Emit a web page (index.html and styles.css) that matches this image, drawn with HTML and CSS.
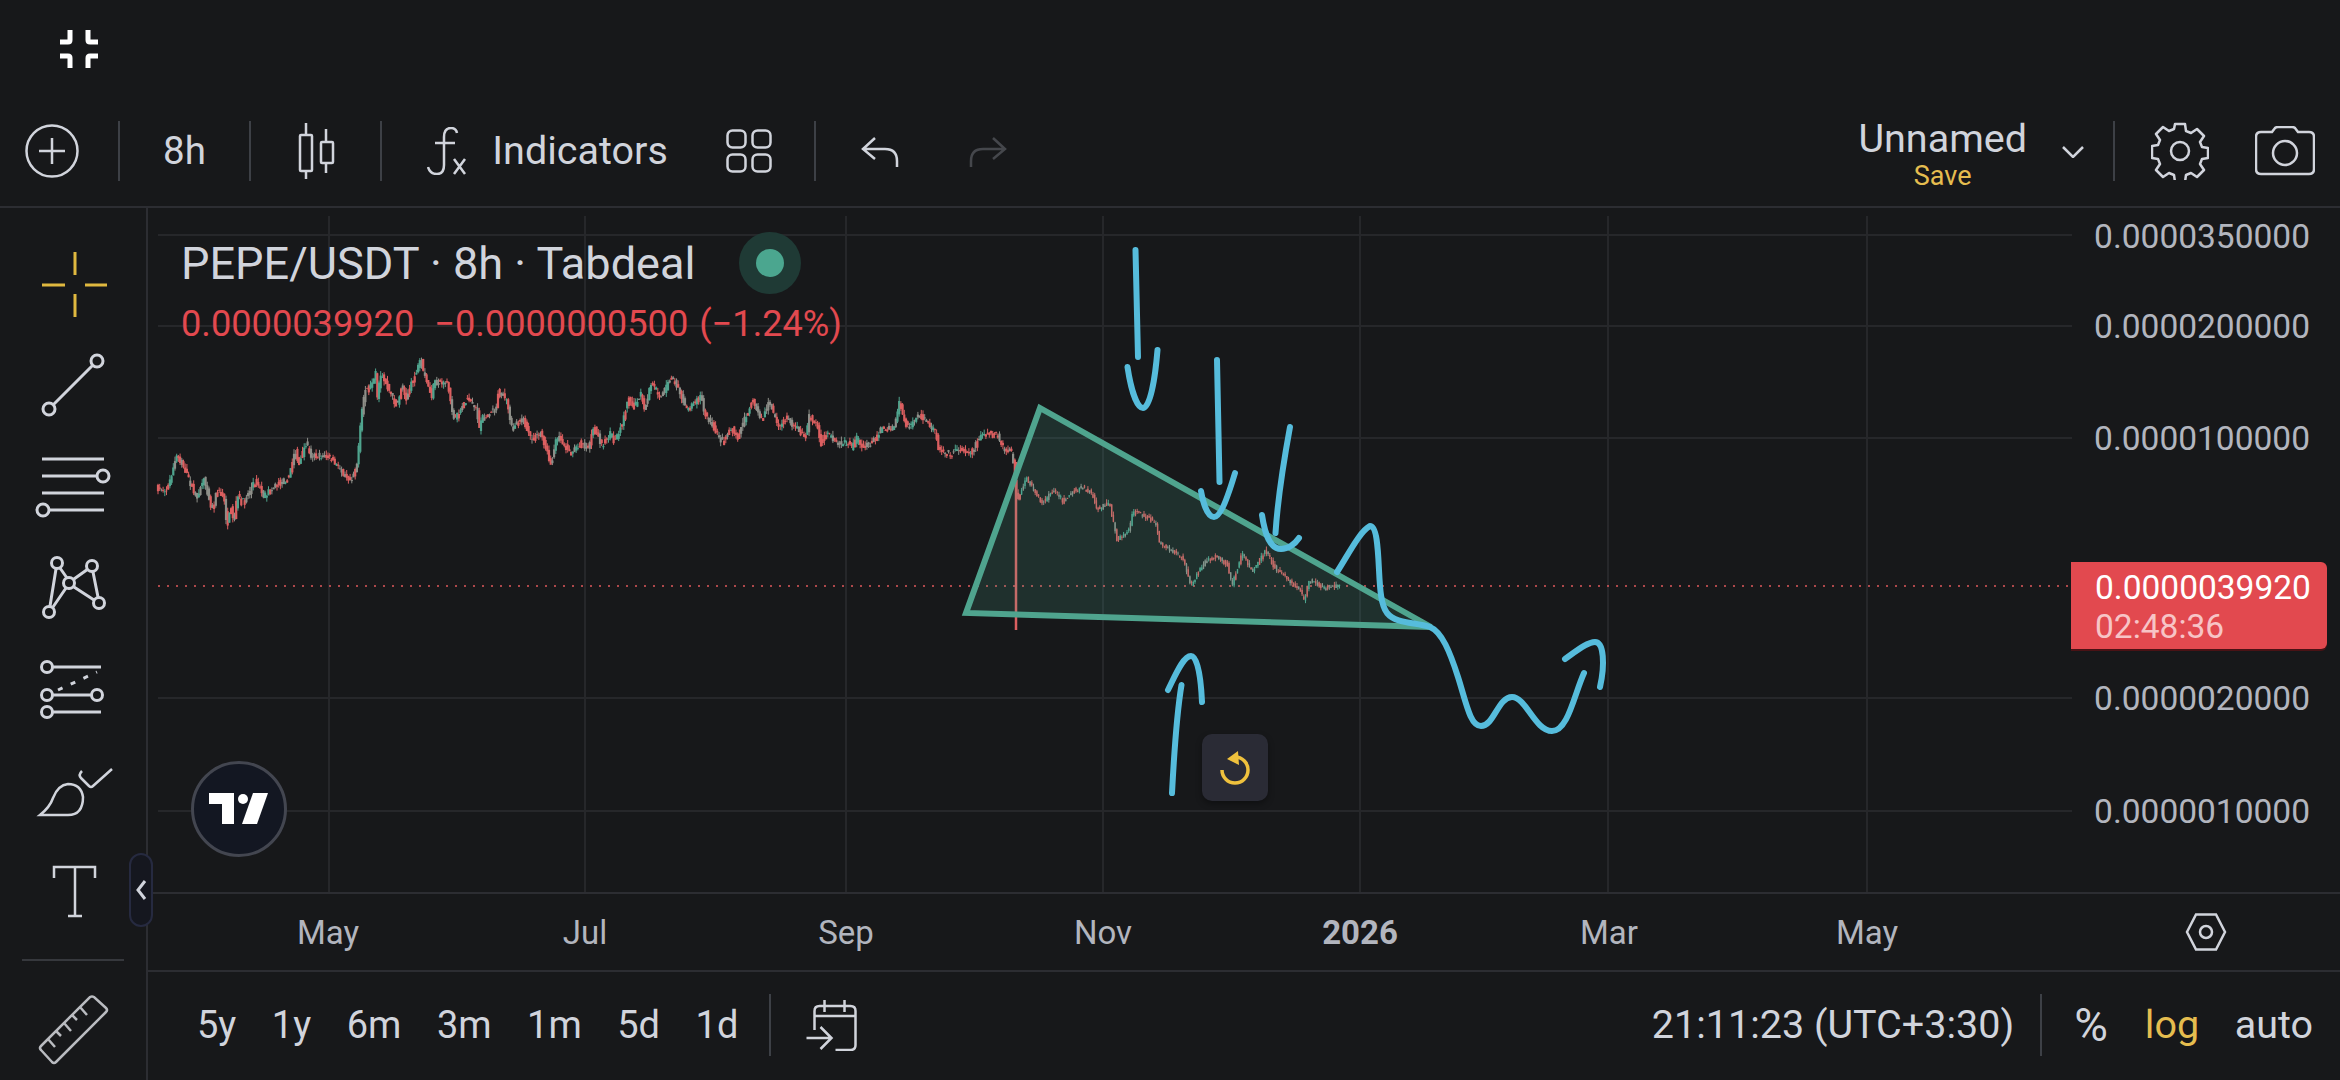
FILE: index.html
```html
<!DOCTYPE html>
<html lang="en">
<head>
<meta charset="utf-8">
<title>PEPE/USDT chart</title>
<link rel="stylesheet" href="styles.css">
</head>
<body>
<div class="app">
  <header class="topbar">
    <svg class="ic-exit" viewBox="0 0 40 40" width="40" height="40"><path d="M11 1v10q0 2-2 2H1M29 1v10q0 2 2 2h8M1 27h8q2 0 2 2v10M39 27h-8q-2 0-2 2v10" fill="none" stroke="#fff" stroke-width="5"/></svg>
  </header>

  <nav class="toolbar">
    <svg class="ic ic-plus" viewBox="0 0 54 54" width="54" height="54"><circle cx="27" cy="27" r="25.500"/><path d="M27 14v26M14 27h26"/></svg>
    <span class="sep sep-a"></span>
    <span class="tb-text tf">8h</span>
    <span class="sep sep-b"></span>
    <svg class="ic ic-candle" viewBox="0 0 38 56" width="38" height="56"><path d="M9 0v12M9 48v8M29 6v13M29 40v10"/><rect x="3" y="12" width="12" height="36" rx="1"/><rect x="24" y="19" width="12" height="21" rx="1"/></svg>
    <span class="sep sep-c"></span>
    <svg class="ic ic-fx" viewBox="0 0 40 48" width="40" height="48"><path d="M30 6q-1-5-6-5-7 0-7 9v28q0 9-7 9-7 0-9-7M8 16h20"/><path d="M27 32l11 15M38 32L27 47"/></svg>
    <span class="tb-text indicators">Indicators</span>
    <svg class="ic ic-grid" viewBox="0 0 46 44" width="46" height="44"><rect x="1.500" y="1.500" width="18" height="17" rx="5"/><rect x="26.500" y="1.500" width="18" height="17" rx="5"/><rect x="1.500" y="25.500" width="18" height="17" rx="5"/><rect x="26.500" y="25.500" width="18" height="17" rx="5"/></svg>
    <span class="sep sep-d"></span>
    <svg class="ic ic-undo" viewBox="0 0 38 30" width="38" height="30"><path d="M14 1L2 12l12 10M2 12h22q12 0 12 12v6"/></svg>
    <svg class="ic ic-redo" viewBox="0 0 38 30" width="38" height="30"><path d="M24 1l12 11-12 10M36 12H14Q2 12 2 24v6"/></svg>
    <div class="tb-right">
      <div class="layout-name">
        <span class="ln-title">Unnamed</span>
        <span class="ln-save">Save</span>
      </div>
      <svg class="ic ic-chev" viewBox="0 0 22 12" width="22" height="12"><path d="M1 1l10 10L21 1"/></svg>
      <span class="sep sep-e"></span>
      <svg class="ic ic-gear" viewBox="0 0 58 58" width="58" height="58"><path d="M24 2h10l1 7 5 2 6-4 7 7-4 6 2 5 6 1v10l-6 1-2 5 4 6-7 7-6-4-5 2-1 7H24l-1-7-5-2-6 4-7-7 4-6-2-5-6-1V24l6-1 2-5-4-6 7-7 6 4 5-2z" stroke-linejoin="round"/><circle cx="29" cy="29" r="9"/></svg>
      <svg class="ic ic-camera" viewBox="0 0 60 50" width="60" height="50"><path d="M6 6h11l3-4q1-1 3-1h14q2 0 3 1l3 4h11q5 0 5 5v32q0 5-5 5H6q-5 0-5-5V11q0-5 5-5z"/><ellipse cx="30" cy="27" rx="12" ry="12"/></svg>
    </div>
  </nav>

  <div class="main">
    <aside class="sidebar">
      <svg class="tool" viewBox="0 234 146 102"><path class="yl" d="M75 252v23M75 294v23M42 285h23M85 285h22"/></svg>
      <svg class="tool" viewBox="0 336 146 102"><path d="M53 405l40-40"/><circle cx="97" cy="361" r="6"/><circle cx="49" cy="409" r="6"/></svg>
      <svg class="tool" viewBox="0 438 146 102"><path d="M42 459h62M42 476h55M42 493h62M50 510h54"/><circle cx="103" cy="476" r="6"/><circle cx="43" cy="510" r="6"/></svg>
      <svg class="tool" viewBox="0 540 146 102"><path d="M50 606l6-37M60 568l7 10M53 607l13-19M74 579l14-10M93 572l5 25M74 587l20 13"/><circle cx="57" cy="563" r="5.500"/><circle cx="92" cy="566" r="5.500"/><circle cx="69" cy="583" r="5.500"/><circle cx="49" cy="612" r="5.500"/><circle cx="99" cy="603" r="5.500"/></svg>
      <svg class="tool" viewBox="0 642 146 102"><path d="M53 667h48M53 695h38M53 712h48"/><path class="dash" d="M58 690l39-18"/><circle cx="47" cy="667" r="5.500"/><circle cx="47" cy="695" r="5.500"/><circle cx="97" cy="695" r="5.500"/><circle cx="47" cy="712" r="5.500"/></svg>
      <svg class="tool thin" viewBox="0 744 146 102"><path d="M40 815q10-8 13-17 5-13 15-14 13 0 15 13 0 18-15 18zM82 771q-4 4-1 7l8 8q2 2 4 0l19-17"/></svg>
      <svg class="tool thin" viewBox="0 846 146 102"><path d="M54 878v-11h41v11M75 867v49M68 916h14"/></svg>
      <div class="side-div"></div>
      <svg class="tool ruler" viewBox="0 974 146 106"><path d="M90 997q2-1 4 0l12 11q2 2 0 4l-50 50q-2 2-4 0l-11-12q-2-2 0-4zM80 1007l7 8M72 1015l5 5M64 1023l7 8M56 1031l5 5M48 1039l7 8"/></svg>
      <button class="collapse" aria-label="Collapse"><svg viewBox="0 0 12 22" width="12" height="22"><path d="M10 2L3 11l7 9" fill="none" stroke="#d1d4dc" stroke-width="3"/></svg></button>
    </aside>

    <section class="work">
      <div class="chart">
        <svg id="plot" class="plot" viewBox="148 208 2192 684" width="2192" height="684">
          <g class="grid">
            <path d="M158 235H2072M158 326H2072M158 438H2072M158 698H2072M158 811H2072"/>
            <path d="M329 216V892M585 216V892M846 216V892M1103 216V892M1360 216V892M1608 216V892M1867 216V892"/>
          </g>
          <path class="last-line" d="M158 586H2072"/>
          <g id="candles"></g>
          <path class="tri" d="M1040 408L966 613 1431 627z"/>
          <g class="ink">
            <path d="M1135.500 250L1138 357M1127.500 367C1131 390 1137 408 1143 408 1150 408 1155 380 1157.500 350"/>
            <path d="M1217 360L1219.500 482M1201 491C1204 508 1209 517 1214 517 1221 517 1229 493 1235 473"/>
            <path d="M1290 427C1283 465 1278 495 1275.500 533M1262 515C1265 535 1270 549 1281 549 1288 549 1295 544 1299 538"/>
            <path d="M1337 572C1348 555 1360 531 1370 526 1377 526 1378 550 1379 570 1380 590 1381 605 1387 613 1396 624 1415 622 1430 627 1442 632 1450 652 1458 677 1466 702 1470 726 1481 726 1494 726 1498 697 1512 697 1526 697 1535 731 1552 731 1568 731 1574 695 1584 673"/>
            <path d="M1565 659C1575 652 1587 642 1595 642 1604 642 1605 665 1600 687"/>
            <path d="M1172 793C1174 755 1176 718 1181.500 685M1168 690C1175 676 1183 656 1191 656 1198 656 1201 680 1202 702"/>
          </g>
        </svg>

        <div class="legend">
          <div class="legend-title">PEPE/USDT · 8h · Tabdeal<span class="status"><i></i></span></div>
          <div class="legend-vals"><span>0.0000039920</span><span>−0.0000000500</span><span>(−1.24%)</span></div>
        </div>

        <span class="price" style="top:9px">0.0000350000</span>
        <span class="price" style="top:99px">0.0000200000</span>
        <span class="price" style="top:211px">0.0000100000</span>
        <span class="price" style="top:471px">0.0000020000</span>
        <span class="price" style="top:584px">0.0000010000</span>

        <div class="last-tag"><span class="lt-price">0.0000039920</span><span class="lt-time">02:48:36</span></div>

        <a class="tv-badge"><svg viewBox="0 0 60 32" width="60" height="32"><path d="M0 0H25V31H13V11H0z" fill="#fff"/><circle cx="34" cy="6" r="5" fill="#fff"/><path d="M44 0h15L48 31H33z" fill="#fff"/></svg></a>
        <button class="reset" aria-label="Reset"><svg viewBox="0 0 34 36" width="34" height="36"><path d="M4 20A13 13 0 1 0 17 7" fill="none" stroke="#efc13d" stroke-width="3.500"/><path d="M20 1L9 9l12 6z" fill="#efc13d"/></svg></button>
      </div>

      <div class="timeaxis">
        <span class="tick" style="left:180px">May</span>
        <span class="tick" style="left:437px">Jul</span>
        <span class="tick" style="left:698px">Sep</span>
        <span class="tick" style="left:955px">Nov</span>
        <span class="tick tick-b" style="left:1212px">2026</span>
        <span class="tick" style="left:1461px">Mar</span>
        <span class="tick" style="left:1719px">May</span>
        <svg class="hex" viewBox="0 0 42 38" width="42" height="38"><path d="M11 1.500h20L40 19l-9 17.500H11L2 19z"/><circle cx="21" cy="19" r="6"/></svg>
      </div>

      <footer class="bottombar">
        <div class="ranges">
          <span>5y</span><span>1y</span><span>6m</span><span>3m</span><span>1m</span><span>5d</span><span>1d</span>
        </div>
        <span class="vsep vsep-l"></span>
        <svg class="ic ic-cal" viewBox="0 0 51 52" width="52" height="52"><path d="M9 31V12q0-5 5-5h31q5 0 5 5v34q0 5-5 5H30M9 17h41M19 1v12M39 1v12M1 39h24M15 28l11 11-11 11"/></svg>
        <div class="br-right">
          <span class="clock">21:11:23 (UTC+3:30)</span>
          <span class="vsep"></span>
          <span class="opt opt-pct">%</span>
          <span class="opt opt-log">log</span>
          <span class="opt opt-auto">auto</span>
        </div>
      </footer>
    </section>
  </div>
</div>
<script src="chart.js"></script>
</body>
</html>
```

FILE: styles.css
```css
* { box-sizing: border-box; }
html, body { margin: 0; padding: 0; background: #17181a; }
body { font-family: Roboto, "Noto Sans", sans-serif; color: #d1d4dc; overflow: hidden; }
.app { width: 2340px; height: 1080px; display: flex; flex-direction: column; background: #17181a; }

.topbar { height: 98px; padding: 29px 0 0 59px; flex: none; }
.ic-exit { display: block; }

.ic { fill: none; stroke: #d1d4dc; stroke-width: 2.500; display: block; flex: none; }
.toolbar { height: 110px; flex: none; display: flex; align-items: center; padding: 0 25px 2px 25px; border-bottom: 2px solid #2c2d32; }
.tb-text { font-size: 38.500px; color: #d1d4dc; line-height: 1; }
.sep { width: 2px; height: 60px; background: #3d4046; flex: none; }
.sep-a { margin-left: 39px; }
.tf { margin-left: 43px; }
.sep-b { margin-left: 43px; }
.ic-candle { margin-left: 46px; }
.sep-c { margin-left: 45px; }
.ic-fx { margin-left: 45px; }
.indicators { margin-left: 25.500px; font-size: 39.500px; }
.ic-grid { margin-left: 58px; }
.sep-d { margin-left: 42px; }
.ic-undo { margin-left: 45px; margin-top: 2px; }
.ic-redo { margin-left: 70px; margin-top: 2px; stroke: #45474c; }
.tb-right { margin-left: auto; display: flex; align-items: center; }
.layout-name { display: flex; flex-direction: column; align-items: center; padding-top: 5px; }
.ln-title { font-size: 39.500px; line-height: 44px; color: #d1d4dc; }
.ln-save { font-size: 27px; line-height: 30px; color: #e5bd4f; }
.ic-chev { margin-left: 35px; margin-top: 2px; }
.sep-e { margin-left: 29px; }
.ic-gear { margin-left: 36px; }
.ic-camera { margin-left: 46px; }

.main { flex: 1; display: flex; min-height: 0; }
.sidebar { position: relative; width: 148px; flex: none; border-right: 2px solid #2c2d32; padding-top: 26px; display: flex; flex-direction: column; }
.tool { display: block; width: 146px; height: 102px; flex: none; fill: none; stroke: #d1d4dc; stroke-width: 3; }
.tool .yl { stroke: #e0b83f; }
.tool .dash { stroke-dasharray: 5 9; }
.tool.thin { stroke-width: 2.500; }
.tool.ruler { height: 106px; stroke: #b9bbc0; stroke-width: 2.500; }
.side-div { height: 2px; margin: 11px 22px 13px; background: #36383d; flex: none; }
.collapse { position: absolute; left: 129px; top: 645px; width: 24px; height: 74px; padding: 0; border: 2px solid #262a40; border-radius: 12px; background: #15171f; display: flex; align-items: center; justify-content: center; z-index: 3; }

.work { flex: 1; display: flex; flex-direction: column; min-width: 0; }
.chart { position: relative; height: 684px; flex: none; overflow: hidden; }
.plot { position: absolute; left: 0; top: 0; display: block; }
.grid path { fill: none; stroke: #26272a; stroke-width: 2; }
.last-line { fill: none; stroke: #e0585c; stroke-width: 2; stroke-dasharray: 2 7; opacity: .75; }
.tri { fill: rgba(76, 175, 150, .16); stroke: #4fa48e; stroke-width: 6; stroke-linejoin: miter; }
.ink path { fill: none; stroke: #56bcdc; stroke-width: 6; stroke-linecap: round; stroke-linejoin: round; }

.legend { position: absolute; left: 33px; top: 24px; }
.legend-title { display: flex; align-items: center; height: 62px; font-size: 45.100px; color: #d1d4dc; white-space: nowrap; }
.status { width: 62px; height: 62px; margin-left: 43px; border-radius: 50%; background: #1f3a35; display: flex; align-items: center; justify-content: center; }
.status i { width: 28px; height: 28px; border-radius: 50%; background: #4ba68f; }
.legend-vals { display: flex; margin-top: 8px; font-size: 36.200px; line-height: 44px; color: #e2494f; white-space: nowrap; }
.legend-vals span:nth-child(2) { margin-left: 20px; }
.legend-vals span:nth-child(3) { margin-left: 11px; }

.price { position: absolute; right: 30px; font-size: 33.500px; line-height: 40px; color: #b2b5be; }
.last-tag { position: absolute; left: 1923px; top: 354px; width: 256px; height: 87px; background: #e2494f; border-radius: 0 6px 6px 0; display: flex; flex-direction: column; padding: 6px 0 0 24px; box-shadow: 0 2px 0 #4a1215; }
.lt-price { font-size: 33.500px; line-height: 40px; color: #fff; }
.lt-time { font-size: 33.500px; line-height: 38px; color: #f7c4c6; }

.tv-badge { position: absolute; left: 43px; top: 553px; width: 96px; height: 96px; border-radius: 50%; border: 3px solid #434650; background: #131722; display: flex; align-items: center; justify-content: center; }
.reset { position: absolute; left: 1054px; top: 526px; width: 66px; height: 67px; padding: 0; border: 0; border-radius: 10px; background: #2a2b35; box-shadow: 0 3px 6px rgba(0, 0, 0, .35); display: flex; align-items: center; justify-content: center; }

.timeaxis { position: relative; height: 80px; flex: none; border-top: 2px solid #2c2d32; border-bottom: 2px solid #2c2d32; }
.tick { position: absolute; top: 19px; transform: translateX(-50%); font-size: 33px; line-height: 40px; color: #b2b5be; }
.tick-b { font-weight: 700; }
.hex { position: absolute; left: 2037px; top: 19px; fill: none; stroke: #d1d4dc; stroke-width: 2.500; }

.bottombar { flex: 1; display: flex; align-items: center; padding: 0 27px 2px 49px; }
.ranges { display: flex; gap: 35.500px; font-size: 38px; color: #d1d4dc; line-height: 1; }
.vsep { width: 2px; height: 62px; background: #3d4046; flex: none; }
.vsep-l { margin-left: 31px; }
.ic-cal { margin-left: 34px; }
.br-right { margin-left: auto; display: flex; align-items: center; font-size: 39.500px; line-height: 1; white-space: nowrap; }
.vsep + .opt { margin-left: 32px; }
.clock { margin-right: 26px; }
.opt-pct { font-size: 46px; }
.opt-log { margin-left: 37px; color: #e5bd4f; }
.opt-auto { margin-left: 35.500px; }
```

FILE: chart.js
```js
// Price path traced as [x, y]; candles are generated along it.
(function () {
  var path = [[158,488],[168,490],[178,455],[185,467],[197,498],[205,478],[213,510],[218,490],[225,497],[228,527],[232,507],[235,523],[238,495],[243,503],[257,480],[265,497],[272,488],[290,477],[296,450],[300,465],[307,443],[312,455],[330,457],[340,468],[352,480],[358,463],[363,410],[366,387],[370,390],[377,370],[378,397],[382,373],[398,407],[403,383],[407,398],[422,360],[424,372],[433,397],[435,382],[448,382],[455,420],[468,398],[478,410],[480,430],[483,418],[497,407],[500,390],[508,403],[512,428],[523,417],[532,440],[542,433],[552,465],[558,435],[572,453],[583,442],[588,450],[595,428],[603,445],[612,433],[615,442],[623,423],[630,395],[635,408],[642,393],[645,412],[652,383],[662,397],[672,377],[680,388],[687,410],[702,395],[705,413],[712,423],[723,442],[732,427],[738,438],[753,400],[763,420],[770,402],[780,428],[787,417],[807,438],[810,415],[818,425],[822,443],[828,433],[838,445],[848,442],[852,448],[858,438],[863,447],[873,442],[883,428],[895,428],[900,402],[908,428],[920,415],[937,432],[938,447],[952,455],[957,448],[973,452],[982,433],[998,435],[1005,450],[1013,452],[1018,503],[1027,478],[1037,493],[1043,503],[1055,490],[1065,502],[1072,492],[1083,487],[1093,493],[1098,510],[1110,502],[1118,540],[1130,530],[1133,512],[1145,515],[1157,523],[1160,543],[1183,557],[1192,585],[1205,563],[1217,555],[1228,565],[1233,585],[1243,553],[1253,572],[1267,550],[1275,567],[1293,583],[1300,588],[1305,600],[1310,580],[1327,588],[1338,585]];

  var NS = 'http://www.w3.org/2000/svg';
  var seed = 7;
  function rnd() { seed = (seed * 16807) % 2147483647; return seed / 2147483647; }

  function yAt(x) {
    for (var i = 1; i < path.length; i++) {
      if (x <= path[i][0]) {
        var a = path[i - 1], b = path[i];
        return a[1] + (b[1] - a[1]) * (x - a[0]) / ((b[0] - a[0]) || 1);
      }
    }
    return path[path.length - 1][1];
  }

  var g = document.getElementById('candles');
  var UP = '#4fa48e', DOWN = '#dc5f60', MIX = '#8e8f89';

  function line(x, y1, y2, color, w) {
    var l = document.createElementNS(NS, 'line');
    l.setAttribute('x1', x); l.setAttribute('x2', x);
    l.setAttribute('y1', y1); l.setAttribute('y2', y2);
    l.setAttribute('stroke', color); l.setAttribute('stroke-width', w);
    g.appendChild(l);
  }

  for (var x = 158; x <= 1340; x += 1.7) {
    var fine = x > 1020;
    var amp = fine ? 2 : 3;
    var y0 = yAt(x - 1) + (rnd() - 0.5) * amp * 2, y1 = yAt(x + 1) + (rnd() - 0.5) * amp * 2;
    var dir = y1 - y0;
    var r = rnd();
    var color;
    if (dir > 0) color = r < 0.72 ? DOWN : MIX;
    else color = r < 0.42 ? UP : r < 0.75 ? MIX : DOWN;
    var hi = Math.min(y0, y1), lo = Math.max(y0, y1);
    var w = fine ? 1.4 : 2.2;
    line(x, hi - rnd() * amp * 1.6, lo + rnd() * amp * 1.6, color, 1);
    line(x, hi, lo + 0.5, color, w);
  }
  line(1016, 462, 630, DOWN, 2.5);
})();
```
